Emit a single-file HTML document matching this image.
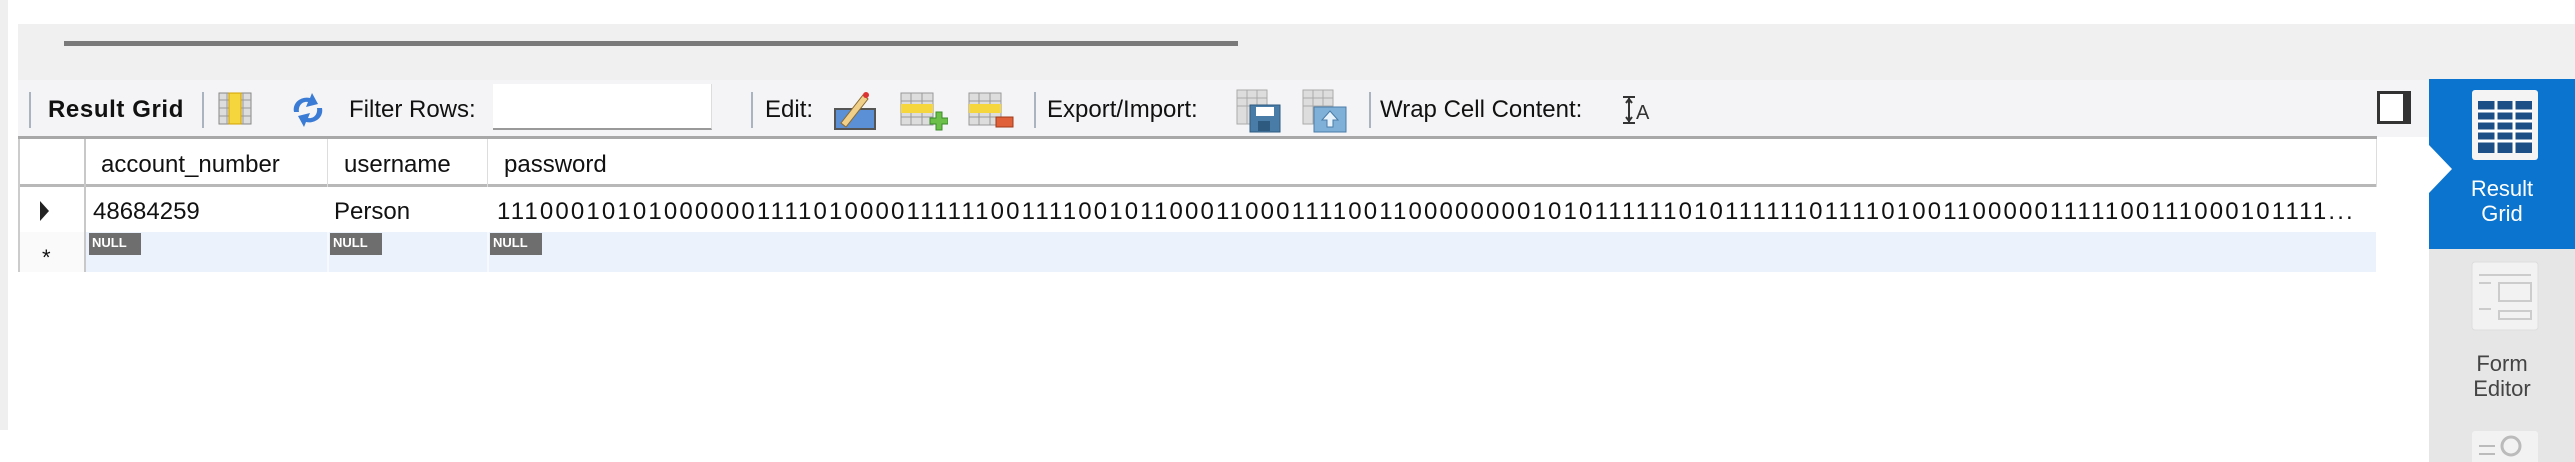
<!DOCTYPE html>
<html><head><meta charset="utf-8"><style>
*{margin:0;padding:0;box-sizing:border-box}
body{width:2575px;height:462px;overflow:hidden;background:#fff;font-family:"Liberation Sans",sans-serif;position:relative;color:#111}
.a{position:absolute}
.t{position:absolute;font-size:24px;line-height:28px;white-space:nowrap}
.sep{position:absolute;width:2px;background:#a9b4c0;top:92px;height:36px}
</style></head><body>
<div class="a" style="left:0;top:0;width:8px;height:430px;background:#efefef"></div>
<div class="a" style="left:18px;top:24px;width:2557px;height:56px;background:#f0f0f0"></div>
<div class="a" style="left:64px;top:41px;width:1174px;height:5px;background:#7a7a7a"></div>
<!-- toolbar -->
<div class="a" style="left:18px;top:80px;width:2412px;height:57px;background:#f4f4f6"></div>
<div class="a" style="left:18px;top:136px;width:2359px;height:3px;background:#a8a8a8"></div>
<div class="sep" style="left:29px"></div>
<div class="t" style="left:48px;top:96px;font-weight:bold;letter-spacing:0.6px">Result Grid</div>
<div class="sep" style="left:202px"></div>
<svg class="a" style="left:218px;top:92px" width="34" height="33" viewBox="0 0 34 33"><rect x="1" y="1" width="32" height="31" fill="#ddd" stroke="#888"/><path d="M1 8H33M1 16H33M1 24H33M9 1V32M25 1V32" stroke="#999"/><rect x="11" y="1" width="12" height="31" fill="#f5d63c" stroke="#d4a000"/></svg>
<svg class="a" style="left:288px;top:92px" width="40" height="36" viewBox="0 0 40 36"><path d="M6 20C4 10 14 4 22 6L24 1L30 12L18 15L20 10C14 9 10 14 11 20Z" fill="#3a7bd5"/><path d="M34 16C36 26 26 32 18 30L16 35L10 24L22 21L20 26C26 27 30 22 29 16Z" fill="#3a7bd5"/></svg>
<div class="t" style="left:349px;top:96px">Filter Rows:</div>
<div class="a" style="left:493px;top:84px;width:219px;height:46px;background:#fff;border-bottom:2px solid #999;border-right:1px solid #ddd"></div>
<div class="sep" style="left:751px"></div>
<div class="t" style="left:765px;top:96px">Edit:</div>
<svg class="a" style="left:833px;top:89px" width="46" height="42" viewBox="0 0 46 42"><rect x="2" y="20" width="40" height="20" fill="#5b8fd6" stroke="#555" stroke-width="2"/><path d="M8 34L30 6L35 10L13 38Z" fill="#f1d08a" stroke="#8a6a30"/><circle cx="33" cy="6" r="3" fill="#d33"/></svg>
<svg class="a" style="left:900px;top:92px" width="48" height="40" viewBox="0 0 48 40"><rect x="1" y="1" width="32" height="32" fill="#ddd" stroke="#999"/><path d="M1 9H33M1 25H33M11 1V33M22 1V33" stroke="#999"/><rect x="1" y="12" width="32" height="9" fill="#f5d63c"/><path d="M30 26h6v-6h6v6h6v6h-6v6h-6v-6h-6z" fill="#6cc04a" stroke="#3a8a2a"/></svg>
<svg class="a" style="left:968px;top:92px" width="46" height="40" viewBox="0 0 46 40"><rect x="1" y="1" width="32" height="32" fill="#ddd" stroke="#999"/><path d="M1 9H33M1 25H33M11 1V33M22 1V33" stroke="#999"/><rect x="1" y="12" width="32" height="9" fill="#f5d63c"/><rect x="28" y="25" width="17" height="10" fill="#e0603a" stroke="#a03a1a"/></svg>
<div class="sep" style="left:1034px"></div>
<div class="t" style="left:1047px;top:96px">Export/Import:</div>
<svg class="a" style="left:1236px;top:89px" width="46" height="44" viewBox="0 0 46 44"><rect x="1" y="1" width="30" height="34" fill="#ddd" stroke="#aaa"/><path d="M1 9H31M1 17H31M11 1V35M21 1V35" stroke="#aaa"/><rect x="14" y="16" width="30" height="27" fill="#4a7ca8" stroke="#2e5a80"/><rect x="20" y="18" width="18" height="9" fill="#fff"/><rect x="22" y="32" width="12" height="10" fill="#2e5a80"/></svg>
<svg class="a" style="left:1302px;top:89px" width="46" height="44" viewBox="0 0 46 44"><rect x="1" y="1" width="30" height="34" fill="#ddd" stroke="#aaa"/><path d="M1 9H31M1 17H31M11 1V35M21 1V35" stroke="#aaa"/><rect x="12" y="18" width="32" height="25" fill="#7fb0d8" stroke="#4a7ca8"/><path d="M28 22L36 31H31V38H25V31H20Z" fill="#e8f2fa" stroke="#4a7ca8"/></svg>
<div class="sep" style="left:1369px"></div>
<div class="t" style="left:1380px;top:96px">Wrap Cell Content:</div>
<svg class="a" style="left:1621px;top:95px" width="30" height="30" viewBox="0 0 30 30"><path d="M2 2H14M2 28H14M8 3V27M5 8L8 4L11 8M5 22L8 26L11 22" stroke="#333" stroke-width="2" fill="none"/><text x="15" y="24" font-size="20" font-family="Liberation Sans" fill="#333">A</text></svg>
<div class="a" style="left:2377px;top:91px;width:34px;height:33px;border:3px solid #333;border-right-width:8px;background:#fff"></div>
<!-- grid -->
<div class="a" style="left:18px;top:139px;width:2359px;height:48px;border-bottom:3px solid #b8b8b8"></div>
<div class="a" style="left:18px;top:139px;width:2px;height:133px;background:#ccc"></div>
<div class="a" style="left:84px;top:139px;width:2px;height:133px;background:#c8c8c8"></div>
<div class="a" style="left:327px;top:139px;width:1px;height:48px;background:#ddd"></div>
<div class="a" style="left:487px;top:139px;width:1px;height:48px;background:#ddd"></div>
<div class="a" style="left:2376px;top:139px;width:1px;height:48px;background:#ddd"></div>
<div class="t" style="left:101px;top:151px">account_number</div>
<div class="t" style="left:344px;top:151px">username</div>
<div class="t" style="left:504px;top:151px">password</div>
<div class="a" style="left:40px;top:201px;width:0;height:0;border-top:10px solid transparent;border-bottom:10px solid transparent;border-left:9px solid #222"></div>
<div class="t" style="left:93px;top:198px">48684259</div>
<div class="t" style="left:334px;top:198px">Person</div>
<div class="t" style="left:497px;top:198px;letter-spacing:2.15px">111000101010000001111010000111111001111001011000110001111001100000000101011111101011111101111010011000001111100111000101111...</div>
<div class="a" style="left:86px;top:232px;width:2290px;height:40px;background:#ebf2fc"></div>
<div class="a" style="left:327px;top:232px;width:2px;height:40px;background:#f6f9fe"></div>
<div class="a" style="left:487px;top:232px;width:2px;height:40px;background:#f6f9fe"></div>
<div class="a" style="left:20px;top:232px;width:64px;height:40px;background:#fafafa"></div>
<div class="t" style="left:42px;top:244px;font-size:22px">*</div>
<div class="a" style="left:89px;top:233px;width:52px;height:22px;background:#6e6e6e;color:#fff;font-size:13px;font-weight:bold;line-height:20px;padding-left:3px">NULL</div>
<div class="a" style="left:330px;top:233px;width:52px;height:22px;background:#6e6e6e;color:#fff;font-size:13px;font-weight:bold;line-height:20px;padding-left:3px">NULL</div>
<div class="a" style="left:490px;top:233px;width:52px;height:22px;background:#6e6e6e;color:#fff;font-size:13px;font-weight:bold;line-height:20px;padding-left:3px">NULL</div>
<!-- sidebar -->
<div class="a" style="left:2429px;top:79px;width:146px;height:383px;background:#e6e6e6"></div>
<div class="a" style="left:2429px;top:79px;width:146px;height:170px;background:#0a74cf"></div>
<div class="a" style="left:2429px;top:145px;width:0;height:0;border-top:24px solid transparent;border-bottom:24px solid transparent;border-left:23px solid #fff"></div>
<svg class="a" style="left:2471px;top:89px" width="68" height="72" viewBox="0 0 68 72"><rect x="1" y="1" width="66" height="70" rx="3" fill="#f4f4f4"/><rect x="7" y="12" width="54" height="52" fill="#1c4f86"/><path d="M7 22H61M7 32H61M7 42H61M7 52H61" stroke="#fff" stroke-width="3"/><path d="M25 12V64M43 12V64" stroke="#fff" stroke-width="3"/></svg>
<div class="t" style="left:2429px;width:146px;text-align:center;top:176px;color:#fff;font-size:22px;line-height:25px">Result<br>Grid</div>
<svg class="a" style="left:2471px;top:261px" width="68" height="70" viewBox="0 0 68 70"><rect x="1" y="1" width="66" height="68" rx="3" fill="#f2f2f2" stroke="#ddd"/><path d="M8 14H60M8 22H20M28 22H60V40H28ZM8 48H20M28 50H60V58H28Z" stroke="#ccc" stroke-width="2" fill="none"/></svg>
<div class="t" style="left:2429px;width:146px;text-align:center;top:351px;color:#444;font-size:22px;line-height:25px">Form<br>Editor</div>
<svg class="a" style="left:2471px;top:430px" width="68" height="32" viewBox="0 0 68 32"><rect x="1" y="1" width="66" height="40" rx="3" fill="#f2f2f2"/><path d="M8 16H24M8 24H24" stroke="#bbb" stroke-width="2"/><circle cx="40" cy="16" r="9" fill="none" stroke="#bbb" stroke-width="3"/></svg>
</body></html>
